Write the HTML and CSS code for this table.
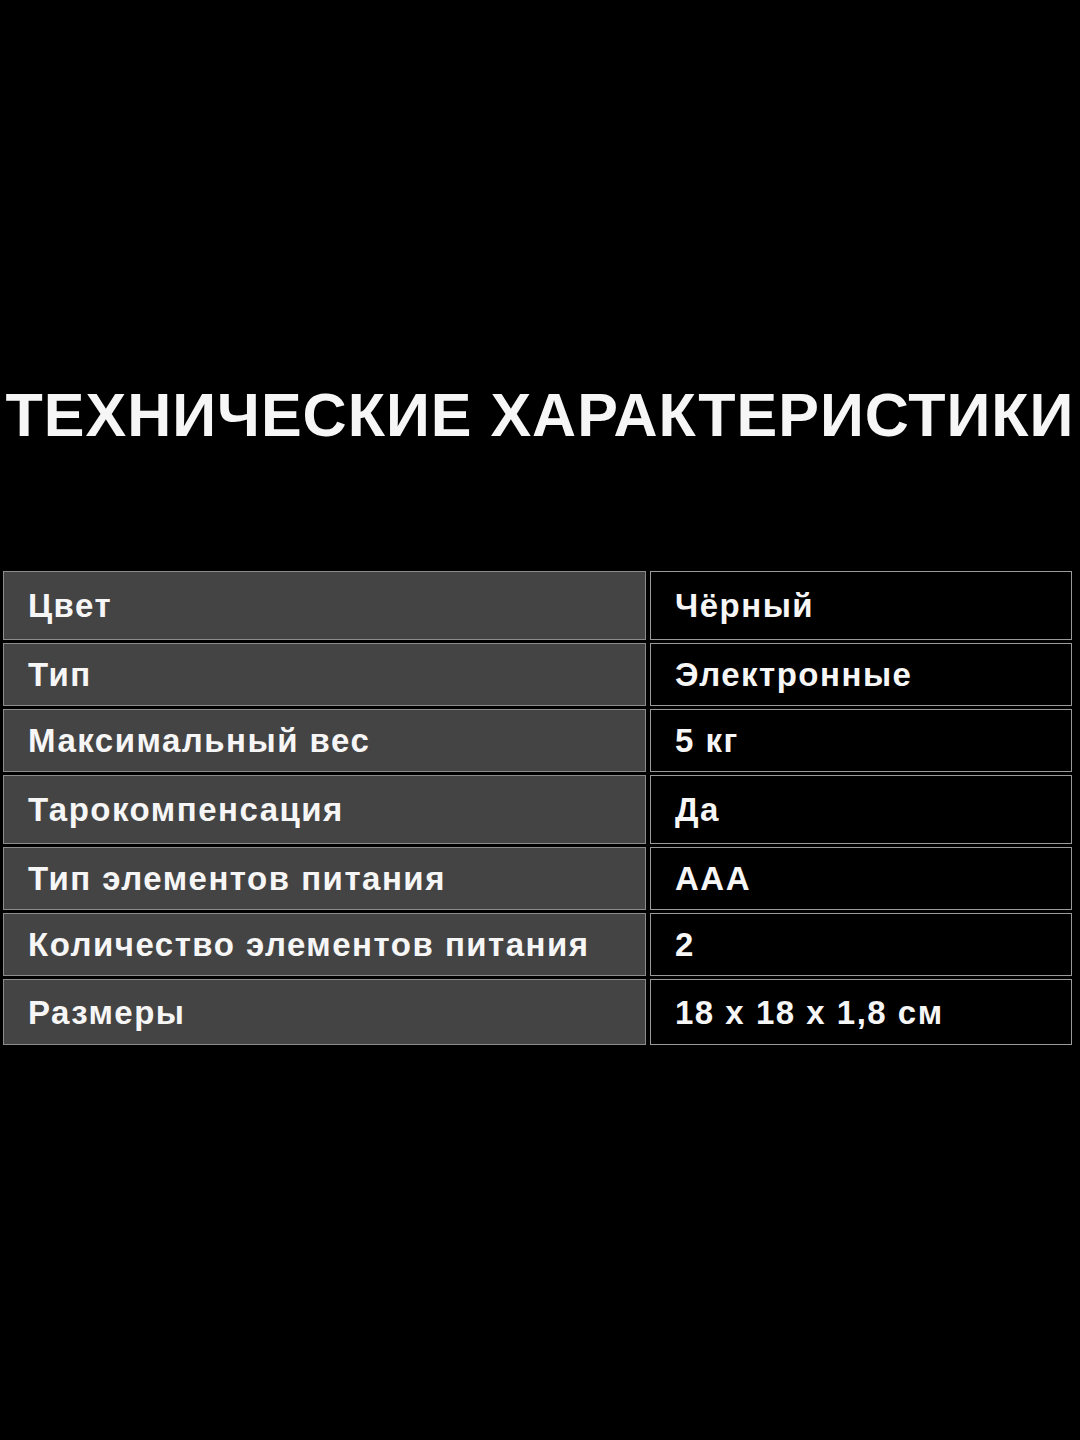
FILE: index.html
```html
<!DOCTYPE html>
<html lang="ru">
<head>
<meta charset="utf-8">
<link rel="stylesheet" href="styles.css">
<title>Технические характеристики</title>
</head>
<body>
<main class="page">
  <h1 class="title">ТЕХНИЧЕСКИЕ ХАРАКТЕРИСТИКИ</h1>
  <div class="specs">
    <div class="cell label">Цвет</div><div class="cell value">Чёрный</div>
    <div class="cell label">Тип</div><div class="cell value">Электронные</div>
    <div class="cell label">Максимальный вес</div><div class="cell value">5 кг</div>
    <div class="cell label">Тарокомпенсация</div><div class="cell value">Да</div>
    <div class="cell label">Тип элементов питания</div><div class="cell value">AAA</div>
    <div class="cell label">Количество элементов питания</div><div class="cell value">2</div>
    <div class="cell label">Размеры</div><div class="cell value">18 x 18 x 1,8 см</div>
  </div>
</main>
</body>
</html>
```
FILE: styles.css
```css
html, body {
  margin: 0;
  padding: 0;
  background: #000;
}
body {
  width: 1080px;
  height: 1440px;
  font-family: "Liberation Sans", Arial, sans-serif;
  color: #f6f6f6;
}
.page {
  display: flex;
  flex-direction: column;
  padding-top: 385px;
}
.title {
  margin: 0;
  font-size: 61px;
  line-height: 60px;
  font-weight: 700;
  text-align: center;
  white-space: nowrap;
  letter-spacing: 1px;
}
.specs {
  margin-top: 126px;
  margin-left: 3px;
  display: grid;
  grid-template-columns: 643px 422px;
  grid-template-rows: 69px 63px 63px 69px 63px 63px 66px;
  column-gap: 4px;
  row-gap: 3px;
}
.cell {
  display: flex;
  align-items: center;
  padding-left: 24px;
  padding-top: 1px;
  font-size: 33px;
  font-weight: 700;
  letter-spacing: 1.5px;
  box-sizing: border-box;
  white-space: nowrap;
}
.label {
  background: #444444;
  border: 1px solid #8c8c8c;
}
.value {
  background: #000;
  border: 1px solid #9a9a9a;
}
```
